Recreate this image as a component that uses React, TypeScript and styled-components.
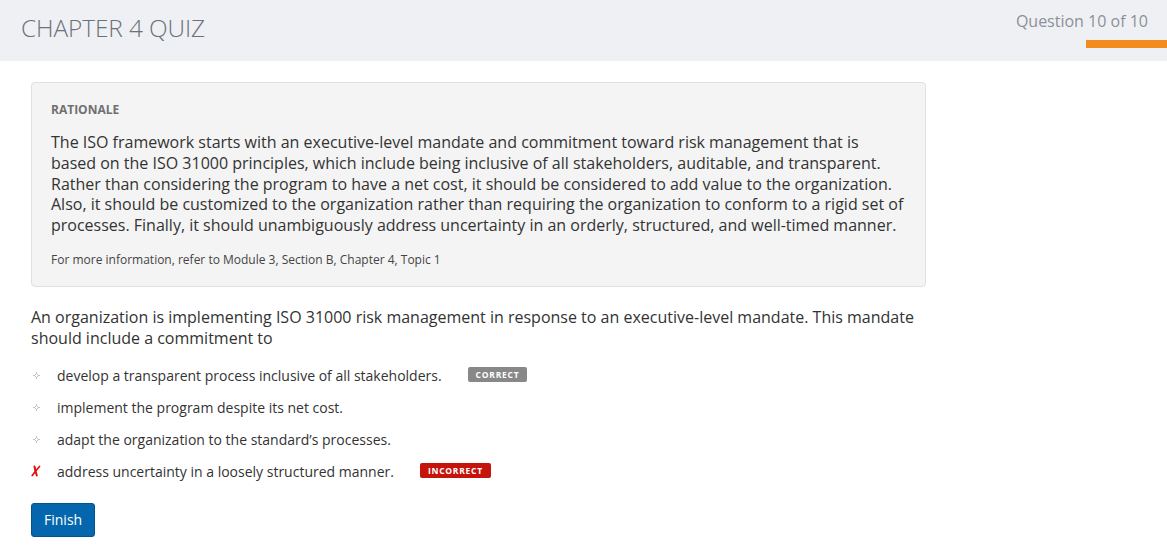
import React from "react";
import styled, { createGlobalStyle } from "styled-components";

const Global = createGlobalStyle`
  html, body { margin: 0; padding: 0; background: #fff; }
  body { font-family: "Open Sans", "Noto Sans", sans-serif; color: #333; overflow: hidden; }
  * { box-sizing: border-box; }
`;

const Header = styled.header`
  height: 61px;
  background: #eff0f4;
  display: flex;
  justify-content: space-between;
  align-items: flex-start;
  padding-left: 21px;
  overflow: hidden;
`;

const Title = styled.h1`
  margin: 11px 0 0;
  font-size: 24.4px;
  font-weight: 300;
  color: #6b707a;
  letter-spacing: -0.1px;
`;

const Progress = styled.div`
  display: flex;
  flex-direction: column;
  align-items: flex-end;
  padding-top: 10px;
  white-space: nowrap;
`;

const ProgressLabel = styled.div`
  font-size: 16px;
  color: #8c9099;
  margin-right: 19px;
`;

const ProgressBar = styled.div`
  margin-top: 8px;
  width: 81px;
  height: 8px;
  background: #f28c1e;
`;

const Main = styled.main`
  padding: 21px 0 0 31px;
  width: 926px;
`;

const Rationale = styled.section`
  background: #f4f4f4;
  border: 1px solid #e0e0e0;
  border-radius: 4px;
  padding: 18px 20px 18px 19px;
`;

const RationaleHead = styled.div`
  font-size: 12px;
  font-weight: 700;
  color: #707070;
  margin-bottom: 14px;
`;

const RationaleText = styled.p`
  margin: 0;
  font-size: 16px;
  line-height: 20.8px;
  color: #333;
`;

const RefNote = styled.p`
  margin: 15px 0 0;
  font-size: 12px;
  color: #444;
`;

const Question = styled.p`
  margin: 20px 0 0;
  font-size: 16px;
  line-height: 21px;
  color: #333;
  padding-right: 8px;
`;

const Options = styled.ul`
  list-style: none;
  margin: 16px 0 0;
  padding: 0;
  display: flex;
  flex-direction: column;
  gap: 11px;
`;

const Option = styled.li`
  display: flex;
  align-items: center;
  height: 21px;
  font-size: 14px;
  color: #333;
`;

const Marker = styled.span`
  width: 26px;
  display: flex;
  align-items: center;
  justify-content: flex-start;
`;

const Badge = styled.span<{ $kind: "correct" | "incorrect" }>`
  margin-left: 26px;
  height: 15px;
  padding: 0 8px;
  border-radius: 2px;
  background: ${(p) => (p.$kind === "correct" ? "#888888" : "#c4140b")};
  color: #fff;
  font-size: 8.5px;
  font-weight: 700;
  letter-spacing: 0.75px;
  display: inline-flex;
  align-items: center;
  margin-top: -2px;
`;

const FinishButton = styled.button`
  margin-top: 21px;
  height: 34px;
  padding: 0 12px;
  background: #0467ae;
  border: 1px solid #03538c;
  border-radius: 3px;
  color: #fff;
  font-family: "Open Sans", sans-serif;
  font-size: 14px;
  cursor: pointer;
`;

const Sparkle = () => (
  <svg width="11" height="11" viewBox="0 0 11 11">
    <g fill="#c2c2c2">
      <rect x="5" y="2" width="1" height="2" />
      <rect x="5" y="7" width="1" height="2" />
      <rect x="2" y="5" width="2" height="1" />
      <rect x="7" y="5" width="2" height="1" />
      <rect x="4" y="4" width="1" height="1" />
      <rect x="6" y="4" width="1" height="1" />
      <rect x="4" y="6" width="1" height="1" />
      <rect x="6" y="6" width="1" height="1" />
    </g>
  </svg>
);

const Cross = () => (
  <svg width="10" height="12" viewBox="0 0 10 12">
    <path d="M3.5 1.5 Q4.2 6 5.8 10.5" stroke="#e0100a" strokeWidth="2" fill="none" strokeLinecap="round" />
    <path d="M8.5 1.5 Q4.5 6 1.2 10.5" stroke="#e0100a" strokeWidth="1.7" fill="none" strokeLinecap="round" />
  </svg>
);

const options = [
  { text: "develop a transparent process inclusive of all stakeholders.", badge: "correct" as const, mark: "none" },
  { text: "implement the program despite its net cost.", mark: "none" },
  { text: "adapt the organization to the standard\u2019s processes.", mark: "none" },
  { text: "address uncertainty in a loosely structured manner.", badge: "incorrect" as const, mark: "x" },
];

export default function App() {
  return (
    <>
      <Global />
      <Header>
        <Title>CHAPTER 4 QUIZ</Title>
        <Progress>
          <ProgressLabel>Question 10 of 10</ProgressLabel>
          <ProgressBar />
        </Progress>
      </Header>
      <Main>
        <Rationale>
          <RationaleHead>RATIONALE</RationaleHead>
          <RationaleText>
            The ISO framework starts with an executive-level mandate and commitment toward risk management that is
            based on the ISO 31000 principles, which include being inclusive of all stakeholders, auditable, and transparent.
            Rather than considering the program to have a net cost, it should be considered to add value to the organization.
            Also, it should be customized to the organization rather than requiring the organization to conform to a rigid set of
            processes. Finally, it should unambiguously address uncertainty in an orderly, structured, and well-timed manner.
          </RationaleText>
          <RefNote>For more information, refer to Module 3, Section B, Chapter 4, Topic 1</RefNote>
        </Rationale>
        <Question>
          An organization is implementing ISO 31000 risk management in response to an executive-level mandate. This mandate
          should include a commitment to
        </Question>
        <Options>
          {options.map((o) => (
            <Option key={o.text}>
              <Marker>{o.mark === "x" ? <Cross /> : <Sparkle />}</Marker>
              {o.text}
              {o.badge && <Badge $kind={o.badge}>{o.badge === "correct" ? "CORRECT" : "INCORRECT"}</Badge>}
            </Option>
          ))}
        </Options>
        <FinishButton>Finish</FinishButton>
      </Main>
    </>
  );
}
